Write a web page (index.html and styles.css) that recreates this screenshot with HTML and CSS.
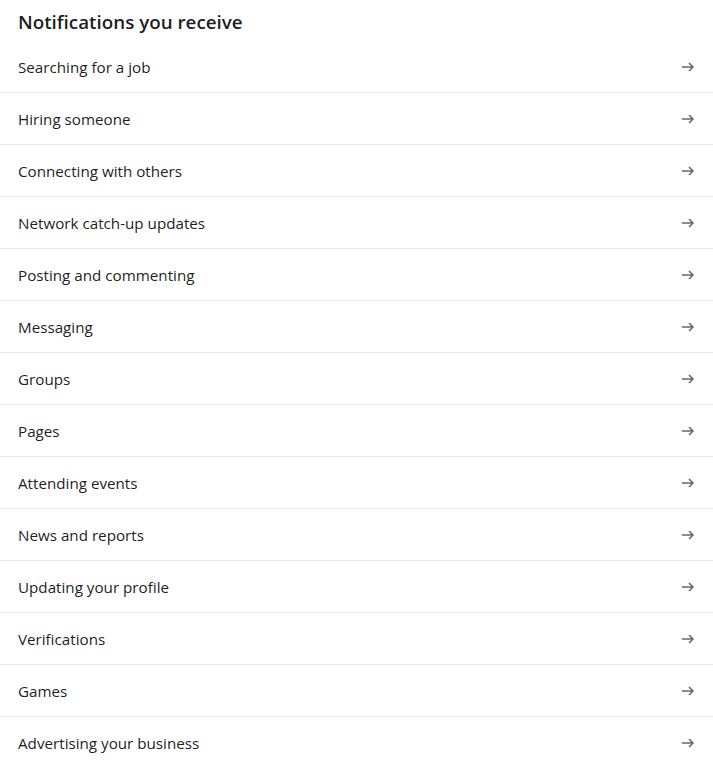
FILE: index.html
```html
<!DOCTYPE html>
<html>
<head>
<meta charset="utf-8">
<link rel="stylesheet" href="styles.css">
</head>
<body>
<section class="panel">
  <h2 class="title">Notifications you receive</h2>
  <ul class="list">
    <li class="row"><span class="label">Searching for a job</span><svg class="arrow" viewBox="0 0 16 16"><path d="M2 8h11M9 4l4 4-4 4"/></svg></li>
    <li class="row"><span class="label">Hiring someone</span><svg class="arrow" viewBox="0 0 16 16"><path d="M2 8h11M9 4l4 4-4 4"/></svg></li>
    <li class="row"><span class="label">Connecting with others</span><svg class="arrow" viewBox="0 0 16 16"><path d="M2 8h11M9 4l4 4-4 4"/></svg></li>
    <li class="row"><span class="label">Network catch-up updates</span><svg class="arrow" viewBox="0 0 16 16"><path d="M2 8h11M9 4l4 4-4 4"/></svg></li>
    <li class="row"><span class="label">Posting and commenting</span><svg class="arrow" viewBox="0 0 16 16"><path d="M2 8h11M9 4l4 4-4 4"/></svg></li>
    <li class="row"><span class="label">Messaging</span><svg class="arrow" viewBox="0 0 16 16"><path d="M2 8h11M9 4l4 4-4 4"/></svg></li>
    <li class="row"><span class="label">Groups</span><svg class="arrow" viewBox="0 0 16 16"><path d="M2 8h11M9 4l4 4-4 4"/></svg></li>
    <li class="row"><span class="label">Pages</span><svg class="arrow" viewBox="0 0 16 16"><path d="M2 8h11M9 4l4 4-4 4"/></svg></li>
    <li class="row"><span class="label">Attending events</span><svg class="arrow" viewBox="0 0 16 16"><path d="M2 8h11M9 4l4 4-4 4"/></svg></li>
    <li class="row"><span class="label">News and reports</span><svg class="arrow" viewBox="0 0 16 16"><path d="M2 8h11M9 4l4 4-4 4"/></svg></li>
    <li class="row"><span class="label">Updating your profile</span><svg class="arrow" viewBox="0 0 16 16"><path d="M2 8h11M9 4l4 4-4 4"/></svg></li>
    <li class="row"><span class="label">Verifications</span><svg class="arrow" viewBox="0 0 16 16"><path d="M2 8h11M9 4l4 4-4 4"/></svg></li>
    <li class="row"><span class="label">Games</span><svg class="arrow" viewBox="0 0 16 16"><path d="M2 8h11M9 4l4 4-4 4"/></svg></li>
    <li class="row"><span class="label">Advertising your business</span><svg class="arrow" viewBox="0 0 16 16"><path d="M2 8h11M9 4l4 4-4 4"/></svg></li>
  </ul>
</section>
</body>
</html>
```
FILE: styles.css
```css
html, body {
  margin: 0;
  padding: 0;
  background: #fff;
}
body {
  font-family: "Open Sans", "Noto Sans", sans-serif;
  color: rgba(0, 0, 0, 0.9);
}
.panel {
  display: flex;
  flex-direction: column;
}
.title {
  margin: 0;
  height: 41px;
  padding: 2px 17px 0 18px;
  display: flex;
  align-items: center;
  font-size: 18.8px;
  font-weight: 600;
  box-sizing: border-box;
}
.list {
  list-style: none;
  margin: 0;
  padding: 0;
}
.row {
  height: 52px;
  box-sizing: border-box;
  border-bottom: 1px solid #e8e8e8;
  display: flex;
  align-items: center;
  justify-content: space-between;
  padding: 0 17px 0 18px;
  font-size: 15.2px;
}
.row:last-child {
  border-bottom: none;
}
.arrow {
  width: 16px;
  height: 16px;
  fill: none;
  stroke: #666;
  stroke-width: 1.5;
}
```
